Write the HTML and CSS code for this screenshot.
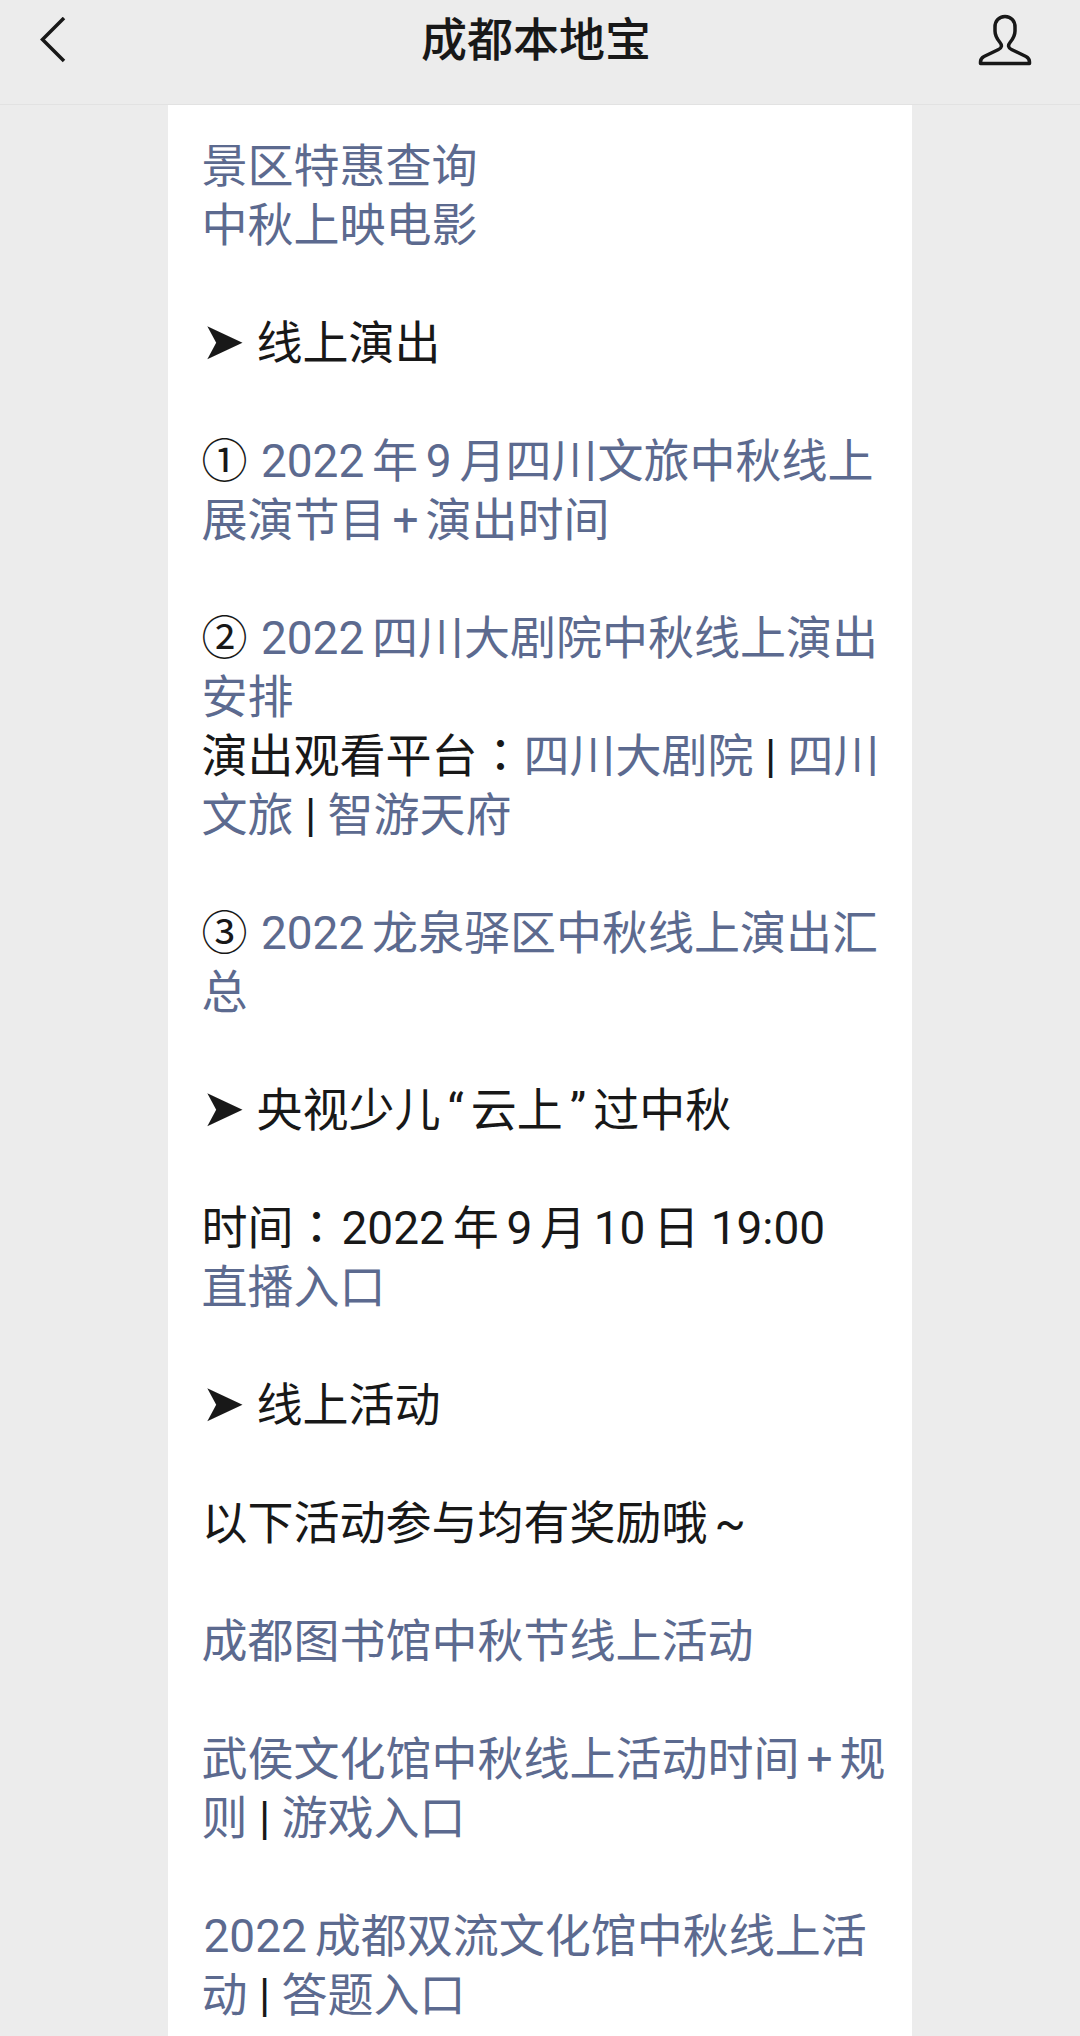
FILE: index.html
```
<!DOCTYPE html>
<html lang="zh-CN">
<head>
    <meta charset="UTF-8">
    <meta name="viewport" content="width=device-width, initial-scale=1.0">
    <title>成都本地宝</title>
    <link rel="stylesheet" href="styles.css">
</head>
<body>
    <header class="header">
        <button class="icon-btn" type="button" aria-label="返回">
            <svg class="icon-back" viewBox="0 0 26 46" aria-hidden="true">
                <path d="M24 1 2.500 22.500 24 44"/>
            </svg>
        </button>
        <h1 class="title">成都本地宝</h1>
        <button class="icon-btn" type="button" aria-label="公众号主页">
            <svg class="icon-user" viewBox="0 0 54 52" aria-hidden="true">
                <path d="M27 2.500C20.500 2.500 17 7.500 17 13v4c0 5 2.500 8.500 5 11.500 2.300 2.800 1.800 5.500-1.500 7L6 42.500C3.500 43.800 2.500 45.500 2.500 48v1.500h49V48c0-2.500-1-4.200-3.500-5.500L33.500 35.500c-3.300-1.500-3.800-4.200-1.500-7 2.500-3 5-6.500 5-11.500v-4C37 7.500 33.500 2.500 27 2.500z"/>
            </svg>
        </button>
    </header>

    <main class="article">
        <p><a href="#">景区特惠查询</a><br><a href="#">中秋上映电影</a></p>

        <p><span class="arrow">➤</span> 线上演出</p>

        <p>① <a href="#"><span class="num">2022</span>年<span class="num">9</span>月四川文旅中秋线上展演节目<span class="sign">+</span>演出时间</a></p>

        <p>② <a href="#"><span class="num">2022</span>四川大剧院中秋线上演出安排</a><br>演出观看平台<span class="colon" lang="zh-TW">：</span><a href="#">四川大剧院</a> | <a href="#">四川文旅</a> | <a href="#">智游天府</a></p>

        <p>③ <a href="#"><span class="num">2022</span>龙泉驿区中秋线上演出汇总</a></p>

        <p><span class="arrow">➤</span> 央视少儿<span class="sign">“</span>云上<span class="sign">”</span>过中秋</p>

        <p>时间<span class="colon" lang="zh-TW">：</span><span class="num">2022</span>年<span class="num">9</span>月<span class="num">10</span>日 19:00<br><a href="#">直播入口</a></p>

        <p><span class="arrow">➤</span> 线上活动</p>

        <p>以下活动参与均有奖励哦<span class="sign">~</span></p>

        <p><a href="#">成都图书馆中秋节线上活动</a></p>

        <p><a href="#">武侯文化馆中秋线上活动时间<span class="sign">+</span>规则</a> | <a href="#">游戏入口</a></p>

        <p><a href="#"><span class="num">2022</span>成都双流文化馆中秋线上活动</a> | <a href="#">答题入口</a></p>
    </main>
</body>
</html>
```
FILE: styles.css
```
*{
    box-sizing: border-box;
}

body{
    margin: 0;
    background: #ececec;
    color: #181818;
    font-family: Roboto, "Noto Sans CJK SC", sans-serif;
    font-size: 46px;
    line-height: 59px;
}

.header{
    display: flex;
    justify-content: space-between;
    align-items: center;
    padding: 9px 48px 33px 40px;
    border-bottom: 1px solid #e2e2e2;
}

.title{
    margin: 0;
    font-size: 46px;
    font-weight: 500;
    line-height: 62px;
}

.icon-btn{
    display: flex;
    width: 54px;
    padding: 0;
    border: none;
    background: none;
    cursor: pointer;
}

.icon-btn svg{
    fill: none;
    stroke: #181818;
    stroke-width: 3.5;
}

.icon-back{
    width: 26px;
    height: 46px;
}

.icon-user{
    width: 54px;
    height: 52px;
    stroke-linejoin: round;
}

.article{
    width: 68.8%;
    margin: 0 auto;
    padding: 32px 24px 28px 33px;
    background: #fff;
    text-autospace: normal;
}

.article p{
    margin: 0 0 59px;
}

.article p:last-child{
    margin-bottom: 0;
}

.article a{
    color: #5c6a8f;
    text-decoration: none;
}

/* full-width colon set in the middle of its box */
.colon{
    font-family: "Noto Sans CJK TC", sans-serif;
    line-height: 1;
}

.num{
    margin: 0 2px;
}

.sign{
    padding: 0 7px;
}

.arrow{
    font-family: "DejaVu Sans", sans-serif;
    font-size: 52px;
    line-height: 1;
}
```
